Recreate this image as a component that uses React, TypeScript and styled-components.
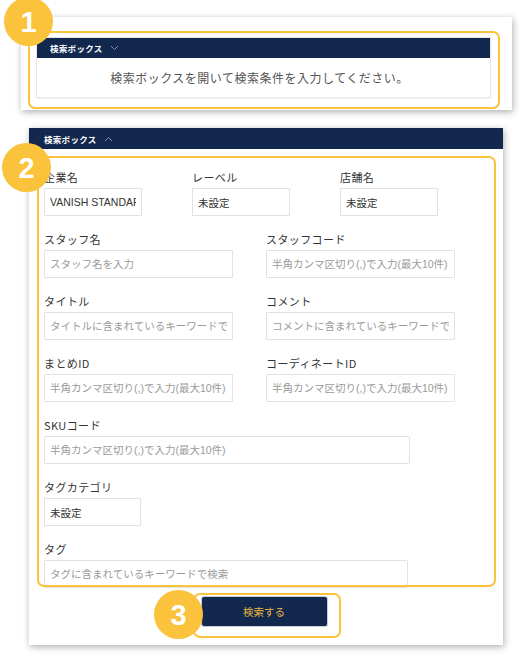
import React from 'react';
import styled, { createGlobalStyle } from 'styled-components';

const GlobalStyle = createGlobalStyle`
  body {
    margin: 0;
    background: #ffffff;
    font-family: "Noto Sans CJK JP", "Noto Sans", sans-serif;
  }
`;

const NAVY = '#12284f';
const YELLOW = '#fbc23c';

type Field = {
  label: string;
  width: number;
  placeholder?: string;
  value?: string;
  select?: boolean;
};

const rows: Field[][] = [
  [
    { label: '企業名', width: 98, value: 'VANISH STANDARD' },
    { label: 'レーベル', width: 98, value: '未設定', select: true },
    { label: '店舗名', width: 98, value: '未設定', select: true },
  ],
  [
    { label: 'スタッフ名', width: 189, placeholder: 'スタッフ名を入力' },
    { label: 'スタッフコード', width: 189, placeholder: '半角カンマ区切り(,)で入力(最大10件)' },
  ],
  [
    { label: 'タイトル', width: 189, placeholder: 'タイトルに含まれているキーワードで検索' },
    { label: 'コメント', width: 189, placeholder: 'コメントに含まれているキーワードで検索' },
  ],
  [
    { label: 'まとめID', width: 189, placeholder: '半角カンマ区切り(,)で入力(最大10件)' },
    { label: 'コーディネートID', width: 189, placeholder: '半角カンマ区切り(,)で入力(最大10件)' },
  ],
  [{ label: 'SKUコード', width: 366, placeholder: '半角カンマ区切り(,)で入力(最大10件)' }],
  [{ label: 'タグカテゴリ', width: 97, value: '未設定', select: true }],
  [{ label: 'タグ', width: 364, placeholder: 'タグに含まれているキーワードで検索' }],
];

const Chevron: React.FC<{ up?: boolean }> = ({ up }) => (
  <svg width="9" height="6" viewBox="0 0 9 6">
    <path
      d={up ? 'M1 5 L4.5 1.5 L8 5' : 'M1 1 L4.5 4.5 L8 1'}
      fill="none"
      stroke="#8f9bb3"
      strokeWidth="0.9"
    />
  </svg>
);

export default function App() {
  return (
    <Page>
      <GlobalStyle />
      <ClosedCard>
        <Panel>
          <PanelHeader>
            検索ボックス
            <Chevron />
          </PanelHeader>
          <Message>検索ボックスを開いて検索条件を入力してください。</Message>
        </Panel>
        <Outline style={{ left: 7, top: 14, width: 472, height: 78 }} />
        <Badge style={{ left: -17, top: -20 }}>1</Badge>
      </ClosedCard>

      <OpenCard>
        <PanelHeader $wide>
          検索ボックス
          <Chevron up />
        </PanelHeader>
        <Form>
          {rows.map((row, i) => (
            <Row key={i} $cols={row.length}>
              {row.map(f => (
                <FieldBox key={f.label}>
                  <Label>{f.label}</Label>
                  {f.select ? (
                    <SelectBox style={{ width: f.width }}>{f.value}</SelectBox>
                  ) : (
                    <Input
                      style={{ width: f.width }}
                      placeholder={f.placeholder}
                      defaultValue={f.value}
                    />
                  )}
                </FieldBox>
              ))}
            </Row>
          ))}
        </Form>
        <ButtonRow>
          <SearchButton>検索する</SearchButton>
        </ButtonRow>
        <Outline style={{ left: 8, top: 28, width: 459, height: 431 }} />
        <Outline style={{ left: 164, top: 465, width: 148, height: 45 }} />
        <Badge style={{ left: -27, top: 15 }}>2</Badge>
        <Badge style={{ left: 125, top: 462 }}>3</Badge>
      </OpenCard>
    </Page>
  );
}

const Page = styled.div`
  width: 526px;
  height: 658px;
  padding: 17px 0 0 21px;
  box-sizing: border-box;
  display: flex;
  flex-direction: column;
  align-items: flex-start;
`;

const Card = styled.div`
  position: relative;
  background: #fff;
  box-sizing: border-box;
  box-shadow: 1px 2px 7px rgba(0, 0, 0, 0.32);
`;

const ClosedCard = styled(Card)`
  width: 491px;
  height: 93px;
  padding: 21px 22px 0 16px;
`;

const OpenCard = styled(Card)`
  width: 474px;
  height: 517px;
  margin: 18px 0 0 8px;
`;

const Panel = styled.div`
  box-shadow: 0 0 0 1px #e6e6e6, 0 1px 2px rgba(0, 0, 0, 0.12);
`;

const PanelHeader = styled.div<{ $wide?: boolean }>`
  height: ${p => (p.$wide ? 21 : 20)}px;
  background: ${NAVY};
  color: #fff;
  font-size: 8.5px;
  font-weight: 700;
  display: flex;
  align-items: center;
  gap: 7px;
  padding-left: ${p => (p.$wide ? 15 : 13)}px;
  letter-spacing: 0.3px;
`;

const Message = styled.div`
  height: 39px;
  display: flex;
  align-items: center;
  justify-content: center;
  font-size: 12px;
  letter-spacing: 0.5px;
  color: #555;
  padding-right: 8px;
`;

const Form = styled.div`
  display: flex;
  flex-direction: column;
  gap: 16px;
  padding: 21px 0 0 15px;
`;

const Row = styled.div<{ $cols: number }>`
  display: flex;
  gap: ${p => (p.$cols === 3 ? 50 : 33)}px;
`;

const FieldBox = styled.div`
  display: flex;
  flex-direction: column;
  gap: 4px;
`;

const Label = styled.div`
  font-size: 11px;
  line-height: 14px;
  color: #333;
  letter-spacing: 0.4px;
`;

const Input = styled.input`
  height: 28px;
  box-sizing: border-box;
  border: 1px solid #e2e2e2;
  border-radius: 1px;
  padding: 0 5px;
  font-family: "Liberation Sans", "Noto Sans CJK JP", sans-serif;
  font-size: 10.5px;
  color: #333;
  outline: none;
  background: #fff;
  &::placeholder {
    color: #9a9a9a;
  }
`;

const SelectBox = styled.div`
  height: 28px;
  box-sizing: border-box;
  border: 1px solid #e2e2e2;
  padding: 0 5px;
  display: flex;
  align-items: center;
  font-size: 10.5px;
  color: #333;
`;

const ButtonRow = styled.div`
  display: flex;
  justify-content: center;
  padding: 9px 4px 0 0;
`;

const SearchButton = styled.button`
  width: 125px;
  height: 29px;
  background: ${NAVY};
  color: #e9b63e;
  border: none;
  border-radius: 2px;
  box-shadow: 0 0 0 1px #c9ccd6;
  font-family: "Noto Sans CJK JP", sans-serif;
  font-size: 10.5px;
`;

const Outline = styled.div`
  position: absolute;
  box-sizing: border-box;
  border: 2.5px solid ${YELLOW};
  border-radius: 7px;
  pointer-events: none;
`;

const Badge = styled.div`
  position: absolute;
  width: 49px;
  height: 49px;
  border-radius: 50%;
  background: ${YELLOW};
  color: #fff;
  display: flex;
  align-items: center;
  justify-content: center;
  font-family: "Liberation Sans", Arial, sans-serif;
  font-weight: 700;
  font-size: 29px;
  padding-top: 1px;
  box-sizing: border-box;
`;
